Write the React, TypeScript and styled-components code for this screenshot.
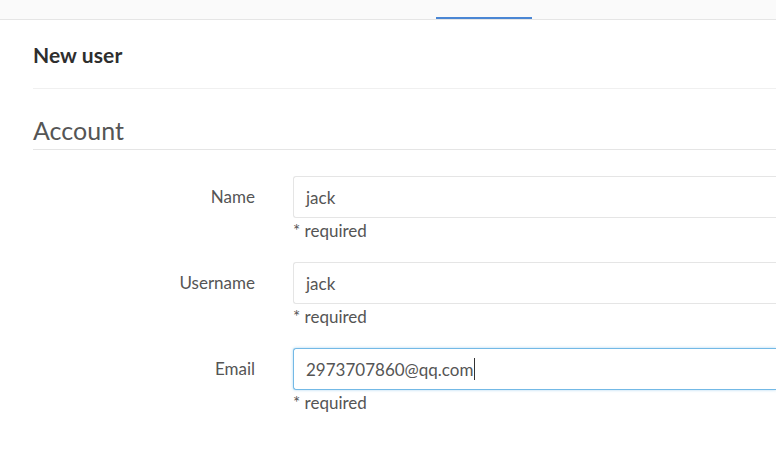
import React from 'react'
import styled, { createGlobalStyle } from 'styled-components'

const GlobalStyle = createGlobalStyle`
  html, body {
    margin: 0;
    padding: 0;
    background: #fff;
    overflow: hidden;
  }
  body {
    font-family: 'Lato', 'Noto Sans', sans-serif;
    color: #2e2e2e;
  }
`

const TopBar = styled.div`
  height: 19px;
  background: #fafafa;
  border-bottom: 1px solid #e5e5e5;
  display: flex;
  padding-left: 436px;
`

const ActiveTab = styled.div`
  width: 96px;
  height: 19px;
  box-sizing: border-box;
  border-bottom: 2px solid #4a86d4;
`

const Content = styled.div`
  padding-left: 33px;
`

const PageTitle = styled.h3`
  margin: 0;
  height: 69px;
  box-sizing: border-box;
  padding-top: 22px;
  font-size: 21px;
  font-weight: 700;
  letter-spacing: 0.1px;
  color: #2e2e2e;
  border-bottom: 1px solid #f0f0f0;
`

const SectionTitle = styled.h4`
  margin: 0;
  height: 61px;
  box-sizing: border-box;
  padding-top: 26px;
  font-size: 25px;
  font-weight: 400;
  color: #555;
  border-bottom: 1px solid #e5e5e5;
`

const Form = styled.div`
  padding-top: 26px;
  display: flex;
  flex-direction: column;
  gap: 21px;
`

const Row = styled.div`
  display: grid;
  grid-template-columns: 222px 1fr;
  column-gap: 38px;
`

const Label = styled.label`
  text-align: right;
  font-size: 17px;
  color: #555;
  line-height: 42px;
`

const Field = styled.div`
  display: flex;
  flex-direction: column;
`

const Input = styled.div<{ $focused?: boolean }>`
  height: 42px;
  box-sizing: border-box;
  border: 1px solid ${(p) => (p.$focused ? '#73b9e6' : '#e5e5e5')};
  border-right: none;
  box-shadow: ${(p) => (p.$focused ? '0 0 3px rgba(115, 185, 230, 0.6)' : 'none')};
  border-radius: 3px 0 0 3px;
  padding: 0 12px;
  font-size: 17px;
  color: #555;
  display: flex;
  align-items: center;
`

const Caret = styled.span`
  display: inline-block;
  width: 1px;
  height: 22px;
  background: #333;
  margin-left: 1px;
`

const Help = styled.div`
  font-size: 17px;
  color: #555;
  margin-top: 3px;
  line-height: 20px;
`

const fields = [
  { label: 'Name', value: 'jack' },
  { label: 'Username', value: 'jack' },
  { label: 'Email', value: '2973707860@qq.com', focused: true },
]

export default function App() {
  return (
    <>
      <GlobalStyle />
      <TopBar>
        <ActiveTab />
      </TopBar>
      <Content>
        <PageTitle>New user</PageTitle>
        <SectionTitle>Account</SectionTitle>
        <Form>
          {fields.map((f) => (
            <Row key={f.label}>
              <Label>{f.label}</Label>
              <Field>
                <Input $focused={f.focused}>
                  {f.value}
                  {f.focused && <Caret />}
                </Input>
                <Help>* required</Help>
              </Field>
            </Row>
          ))}
        </Form>
      </Content>
    </>
  )
}
